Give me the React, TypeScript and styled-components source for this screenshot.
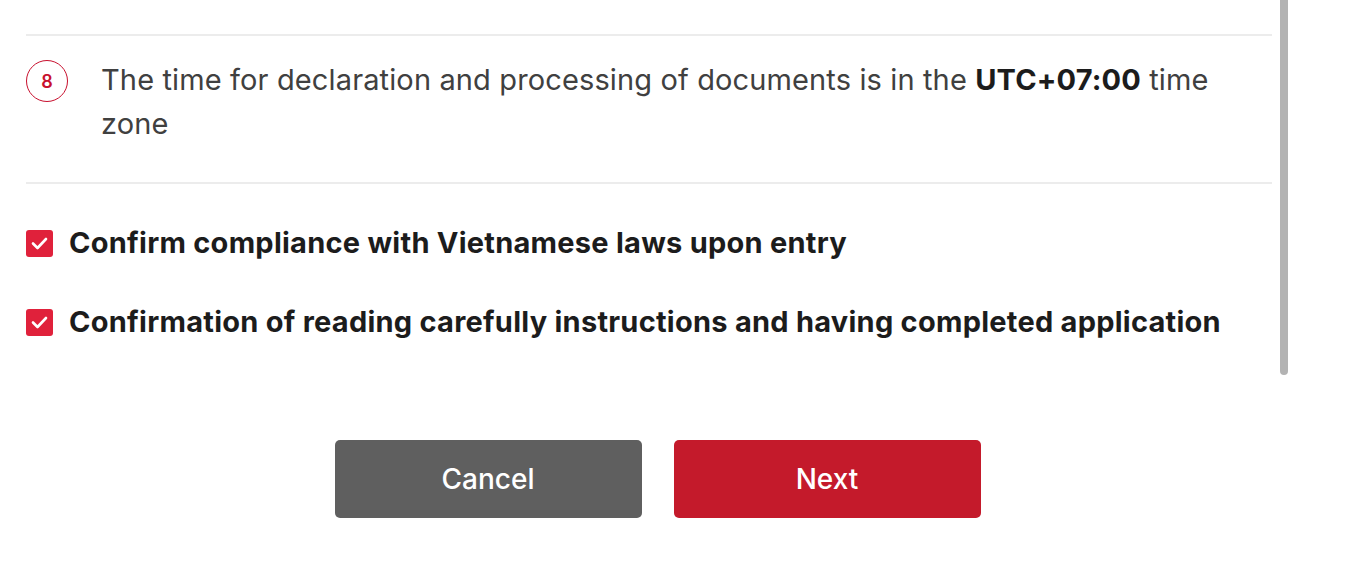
import React, { useState } from "react";
import styled, { createGlobalStyle } from "styled-components";

const GlobalStyle = createGlobalStyle`
  html, body {
    margin: 0;
    padding: 0;
    background: #ffffff;
  }
  body {
    font-family: Inter, "Noto Sans", Arial, sans-serif;
    color: #3a3a3a;
  }
`;

const Page = styled.div`
  width: 1346px;
  height: 570px;
  display: flex;
  flex-direction: column;
  overflow: hidden;
`;

const ScrollArea = styled.div`
  display: flex;
  flex-direction: row;
  height: 375px;
`;

const Content = styled.div`
  width: 1246px;
  margin-left: 26px;
  padding-top: 34px;
`;

const Divider = styled.div`
  height: 2px;
  background: #ececec;
`;

const NoteRow = styled.div`
  display: flex;
  align-items: flex-start;
  gap: 33px;
  padding: 24px 0 36px;
`;

const StepBadge = styled.div`
  flex: 0 0 auto;
  width: 40px;
  height: 40px;
  border: 1.5px solid #c8102e;
  border-radius: 50%;
  display: flex;
  align-items: center;
  justify-content: center;
  color: #c8102e;
  font-size: 18px;
  font-weight: 600;
`;

const NoteText = styled.p`
  margin: -2px 0 0;
  font-size: 29px;
  line-height: 44px;
  letter-spacing: 0.13px;
  color: #404040;
  strong {
    font-weight: 700;
    color: #1c1c1c;
  }
`;

const CheckList = styled.div`
  display: flex;
  flex-direction: column;
  gap: 43px;
  padding-top: 41px;
`;

const CheckRow = styled.label`
  display: flex;
  align-items: center;
  gap: 16px;
  cursor: pointer;
`;

const Box = styled.span<{ $checked: boolean }>`
  flex: 0 0 auto;
  width: 27px;
  height: 27px;
  border-radius: 3px;
  background: ${(p) => (p.$checked ? "#e0213b" : "#ffffff")};
  border: ${(p) => (p.$checked ? "none" : "2px solid #999")};
  display: flex;
  align-items: center;
  justify-content: center;
`;

const CheckLabel = styled.span`
  font-size: 29px;
  line-height: 36px;
  font-weight: 700;
  letter-spacing: 0.25px;
  color: #1c1c1c;
`;

const ScrollTrack = styled.div`
  margin-left: 8px;
  width: 8px;
  height: 375px;
  background: #b3b3b3;
  border-radius: 0 0 4px 4px;
`;

const ButtonRow = styled.div`
  display: flex;
  justify-content: center;
  gap: 32px;
  padding: 65px 31px 0 0;
`;

const Button = styled.button<{ $variant: "cancel" | "next" }>`
  width: 307px;
  height: 78px;
  border: none;
  border-radius: 5px;
  background: ${(p) => (p.$variant === "next" ? "#c41a2b" : "#5f5f5f")};
  color: #ffffff;
  font-family: Inter, "Noto Sans", Arial, sans-serif;
  font-size: 28px;
  font-weight: 500;
  cursor: pointer;
`;

const Check = () => (
  <svg width="17" height="13" viewBox="0 0 17 13">
    <path
      d="M2 6.5 L6.5 11 L15 2"
      fill="none"
      stroke="#ffffff"
      strokeWidth="2.6"
      strokeLinecap="round"
      strokeLinejoin="round"
    />
  </svg>
);

const confirmations = [
  "Confirm compliance with Vietnamese laws upon entry",
  "Confirmation of reading carefully instructions and having completed application",
];

const App = () => {
  const [checked, setChecked] = useState<boolean[]>([true, true]);

  const toggle = (i: number) =>
    setChecked((prev) => prev.map((v, j) => (j === i ? !v : v)));

  return (
    <>
      <GlobalStyle />
      <Page>
        <ScrollArea>
          <Content>
            <Divider />
            <NoteRow>
              <StepBadge>8</StepBadge>
              <NoteText>
                The time for declaration and processing of documents is in the{" "}
                <strong>UTC+07:00</strong> time zone
              </NoteText>
            </NoteRow>
            <Divider />
            <CheckList>
              {confirmations.map((text, i) => (
                <CheckRow key={text} onClick={() => toggle(i)}>
                  <Box $checked={checked[i]}>{checked[i] && <Check />}</Box>
                  <CheckLabel>{text}</CheckLabel>
                </CheckRow>
              ))}
            </CheckList>
          </Content>
          <ScrollTrack />
        </ScrollArea>
        <ButtonRow>
          <Button $variant="cancel">Cancel</Button>
          <Button $variant="next">Next</Button>
        </ButtonRow>
      </Page>
    </>
  );
};

export default App;
